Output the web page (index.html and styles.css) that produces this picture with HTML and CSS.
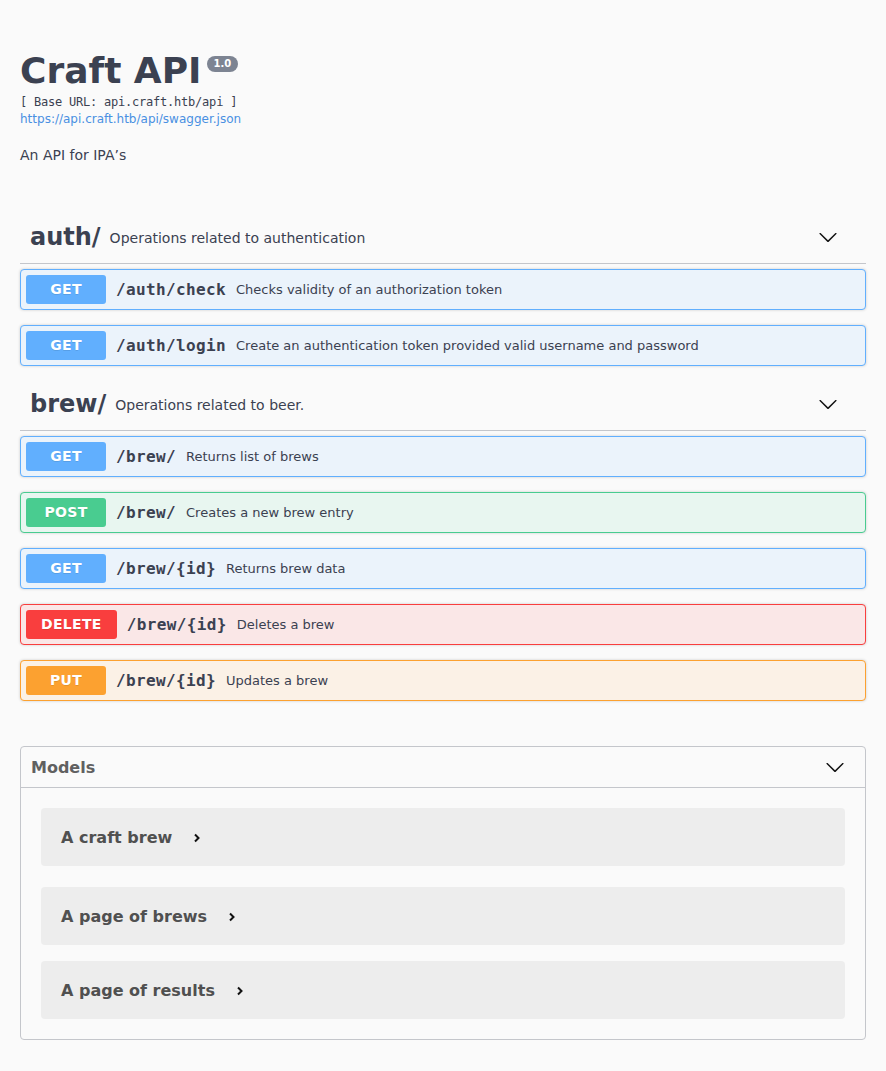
FILE: index.html
```html
<!DOCTYPE html>
<html>
<head>
<meta charset="utf-8">
<title>Craft API</title>
<link rel="stylesheet" href="styles.css">
</head>
<body>
<div class="wrapper">
  <div class="info">
    <h2 class="title">Craft API<span class="version">1.0</span></h2>
    <div class="base-url">[ Base URL: api.craft.htb/api ]</div>
    <a class="spec-link" href="#">https://api.craft.htb/api/swagger.json</a>
    <p class="desc">An API for IPA’s</p>
  </div>

  <section class="tag-section">
    <h4 class="tag-header">
      <span class="tag-name">auth/</span>
      <span class="tag-desc">Operations related to authentication</span>
      <svg class="tag-arrow" width="20" height="20" viewBox="0 0 20 20"><path d="M17.418 6.109c.272-.268.709-.268.979 0s.271.701 0 .969l-7.908 7.83c-.27.268-.707.268-.979 0l-7.908-7.83c-.27-.268-.27-.701 0-.969.271-.268.709-.268.979 0L10 13.25l7.418-7.141z"/></svg>
    </h4>
    <div class="opblock get"><span class="method">GET</span><span class="path">/auth/check</span><span class="op-desc">Checks validity of an authorization token</span></div>
    <div class="opblock get"><span class="method">GET</span><span class="path">/auth/login</span><span class="op-desc">Create an authentication token provided valid username and password</span></div>
  </section>

  <section class="tag-section">
    <h4 class="tag-header">
      <span class="tag-name">brew/</span>
      <span class="tag-desc">Operations related to beer.</span>
      <svg class="tag-arrow" width="20" height="20" viewBox="0 0 20 20"><path d="M17.418 6.109c.272-.268.709-.268.979 0s.271.701 0 .969l-7.908 7.83c-.27.268-.707.268-.979 0l-7.908-7.83c-.27-.268-.27-.701 0-.969.271-.268.709-.268.979 0L10 13.25l7.418-7.141z"/></svg>
    </h4>
    <div class="opblock get"><span class="method">GET</span><span class="path">/brew/</span><span class="op-desc">Returns list of brews</span></div>
    <div class="opblock post"><span class="method">POST</span><span class="path">/brew/</span><span class="op-desc">Creates a new brew entry</span></div>
    <div class="opblock get"><span class="method">GET</span><span class="path">/brew/{id}</span><span class="op-desc">Returns brew data</span></div>
    <div class="opblock delete"><span class="method">DELETE</span><span class="path">/brew/{id}</span><span class="op-desc">Deletes a brew</span></div>
    <div class="opblock put"><span class="method">PUT</span><span class="path">/brew/{id}</span><span class="op-desc">Updates a brew</span></div>
  </section>

  <section class="models">
    <h4 class="models-header">
      <span>Models</span>
      <svg class="models-arrow" width="20" height="20" viewBox="0 0 20 20"><path d="M17.418 6.109c.272-.268.709-.268.979 0s.271.701 0 .969l-7.908 7.83c-.27.268-.707.268-.979 0l-7.908-7.83c-.27-.268-.27-.701 0-.969.271-.268.709-.268.979 0L10 13.25l7.418-7.141z"/></svg>
    </h4>
    <div class="model-list">
      <div class="model first"><span class="model-name">A craft brew</span><svg class="model-arrow" width="8" height="10" viewBox="0 0 8 10"><path d="M2 1.5 L5.5 5 L2 8.5" fill="none" stroke="#111" stroke-width="2"/></svg></div>
      <div class="model"><span class="model-name">A page of brews</span><svg class="model-arrow" width="8" height="10" viewBox="0 0 8 10"><path d="M2 1.5 L5.5 5 L2 8.5" fill="none" stroke="#111" stroke-width="2"/></svg></div>
      <div class="model"><span class="model-name">A page of results</span><svg class="model-arrow" width="8" height="10" viewBox="0 0 8 10"><path d="M2 1.5 L5.5 5 L2 8.5" fill="none" stroke="#111" stroke-width="2"/></svg></div>
    </div>
  </section>
</div>
</body>
</html>
```

FILE: styles.css
```css
html, body {
  margin: 0;
  padding: 0;
  background: #fafafa;
}
body {
  font-family: "DejaVu Sans", sans-serif;
  color: #3b4151;
}
.wrapper {
  padding: 0 20px 30px;
}
.info {
  padding-top: 50px;
  margin-bottom: 49px;
}
.title {
  margin: 0;
  font-size: 36px;
  font-weight: 700;
  line-height: 42px;
  color: #3b4151;
}
.version {
  display: inline-block;
  position: relative;
  top: -3px;
  vertical-align: super;
  font-size: 10px;
  line-height: 12px;
  font-weight: 700;
  color: #fff;
  background: #7d8492;
  border-radius: 57px;
  padding: 2px 7px;
  margin-left: 5px;
}
.base-url {
  font-family: "DejaVu Sans Mono", monospace;
  font-size: 12px;
  line-height: 16px;
  letter-spacing: -0.22px;
  margin-top: 2px;
}
.spec-link {
  display: block;
  font-size: 12px;
  line-height: 18px;
  color: #4990e2;
  text-decoration: none;
}
.desc {
  font-size: 14px;
  line-height: 20px;
  margin: 17px 0 0;
}
.tag-header {
  display: flex;
  align-items: center;
  margin: 0 0 5px;
  padding: 8px 28px 12px 10px;
  height: 29px;
  border-bottom: 1px solid #c4c6cb;
  font-weight: 400;
}
.tag-name {
  font-size: 24px;
  font-weight: 700;
}
.tag-desc {
  flex: 1;
  font-size: 14px;
  margin-left: 9px;
  padding-top: 2px;
}
.tag-arrow, .models-arrow {
  fill: #111;
}
.opblock {
  display: flex;
  align-items: center;
  margin: 0 0 15px;
  padding: 5px;
  border: 1px solid;
  border-radius: 4px;
  box-shadow: 0 0 3px rgba(0, 0, 0, 0.19);
}
.method {
  min-width: 80px;
  box-sizing: border-box;
  padding: 6px 15px;
  font-size: 14px;
  line-height: 17px;
  font-weight: 700;
  letter-spacing: 0.33px;
  color: #fff;
  text-align: center;
  border-radius: 3px;
  text-shadow: 0 1px 0 rgba(0, 0, 0, 0.1);
}
.path {
  font-family: "DejaVu Sans Mono", monospace;
  font-size: 16px;
  font-weight: 700;
  letter-spacing: 0.37px;
  padding: 0 10px;
}
.op-desc {
  font-size: 13px;
}
.get { background: #ebf3fb; border-color: #61affe; }
.get .method { background: #61affe; }
.post { background: #e8f6f0; border-color: #49cc90; }
.post .method { background: #49cc90; }
.delete { background: #fae7e7; border-color: #f93e3e; }
.delete .method { background: #f93e3e; }
.put { background: #fbf1e6; border-color: #fca130; }
.put .method { background: #fca130; }

.models {
  margin-top: 45px;
  border: 1px solid #c4c6cb;
  border-radius: 4px;
}
.models-header {
  display: flex;
  align-items: center;
  justify-content: space-between;
  margin: 0;
  padding: 10px 20px 10px 10px;
  height: 20px;
  border-bottom: 1px solid #c4c6cb;
  font-size: 16px;
  font-weight: 700;
  color: #606060;
}
.model-list {
  padding: 20px 0 4px;
}
.model {
  display: flex;
  align-items: center;
  height: 58px;
  margin: 0 20px 16px;
  padding: 0 20px;
  background: #ededed;
  border-radius: 4px;
}
.model.first {
  margin-bottom: 21px;
}
.model-name {
  font-size: 16px;
  font-weight: 700;
  color: #505050;
}
.model-arrow {
  margin-left: 21px;
  margin-top: 2px;
}
```
